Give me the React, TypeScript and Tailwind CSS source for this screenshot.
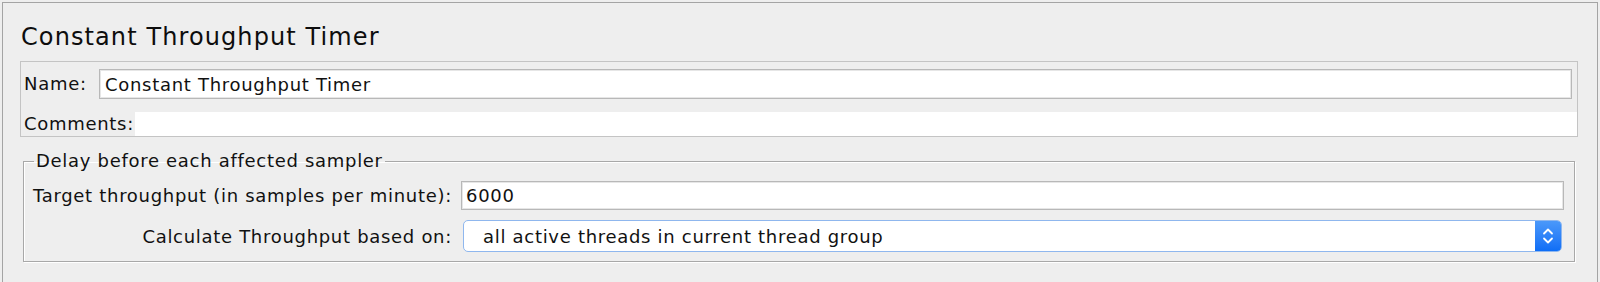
import React from "react";

const font = "font-['DejaVu_Sans','Liberation_Sans',sans-serif]";

const ComboArrows: React.FC = () => (
  <svg width="12" height="18" viewBox="0 0 12 18" fill="none">
    <path d="M2 6.5 L6 2.5 L10 6.5" stroke="white" strokeWidth="1.8" strokeLinecap="round" strokeLinejoin="round" />
    <path d="M2 11.5 L6 15.5 L10 11.5" stroke="white" strokeWidth="1.8" strokeLinecap="round" strokeLinejoin="round" />
  </svg>
);

const App: React.FC = () => {
  return (
    <div className={`w-[1600px] h-[282px] overflow-hidden bg-[#eeeeee] pt-[2px] px-[2px] text-[#111111] text-[18px] tracking-[0.7px] ${font}`}>
      <div className="h-[300px] border-l border-t border-r border-[#a4a4a4] pt-[17px]">
        {/* title */}
        <h1 className="ml-[18px] text-[24px] leading-[34px] tracking-[1.1px] text-[#0d0d0d]">
          Constant Throughput Timer
        </h1>

        {/* name / comments */}
        <div className="ml-[17px] mr-[19px] mt-[7px] h-[76px] border border-[#c4c4c4] pl-[3px]">
          <div className="flex items-center h-[30px] mt-[7px] pr-[5px]">
            <span className="w-[75px] shrink-0 leading-[22px] whitespace-nowrap">Name:</span>
            <div className="flex-1 h-[30px] bg-white border border-[#b8b8b8] shadow-[inset_0_0_0_1px_#e6e6e6] flex items-center pl-[5px]">
              Constant Throughput Timer
            </div>
          </div>
          <div className="flex items-center h-[24px] mt-[13px]">
            <span className="w-[111px] shrink-0 leading-[22px] whitespace-nowrap">Comments:</span>
            <div className="flex-1 h-[24px] bg-white" />
          </div>
        </div>

        {/* group box */}
        <fieldset className="ml-[20px] mr-[22px] mt-[13px] h-[112px] border border-[#a8a8a8] shadow-[1px_1px_0_#ffffff,inset_1px_1px_0_#ffffff] px-[9px]">
          <legend className="ml-[1px] px-[2px] leading-[22px]">
            Delay before each affected sampler
          </legend>
          <div className="grid grid-cols-[428px_1fr] gap-y-[10px] mt-[9px] pr-[1px]">
            <div className="flex items-center justify-end pr-[9px] whitespace-nowrap">
              Target throughput (in samples per minute):
            </div>
            <div className="h-[29px] bg-white border border-[#b8b8b8] shadow-[inset_0_0_0_1px_#e6e6e6] flex items-center pl-[4px]">
              6000
            </div>
            <div className="flex items-center justify-end pr-[9px] whitespace-nowrap">
              Calculate Throughput based on:
            </div>
            <div className="h-[32px] ml-[2px] mr-[2px] flex rounded-[5px] border border-[#8fb7ee] bg-white overflow-hidden">
              <div className="flex-1 flex items-center pl-[19px]">
                all active threads in current thread group
              </div>
              <div className="w-[26px] flex items-center justify-center bg-gradient-to-b from-[#4a98fa] to-[#0d6ef6]">
                <ComboArrows />
              </div>
            </div>
          </div>
        </fieldset>
      </div>
    </div>
  );
};

export default App;
